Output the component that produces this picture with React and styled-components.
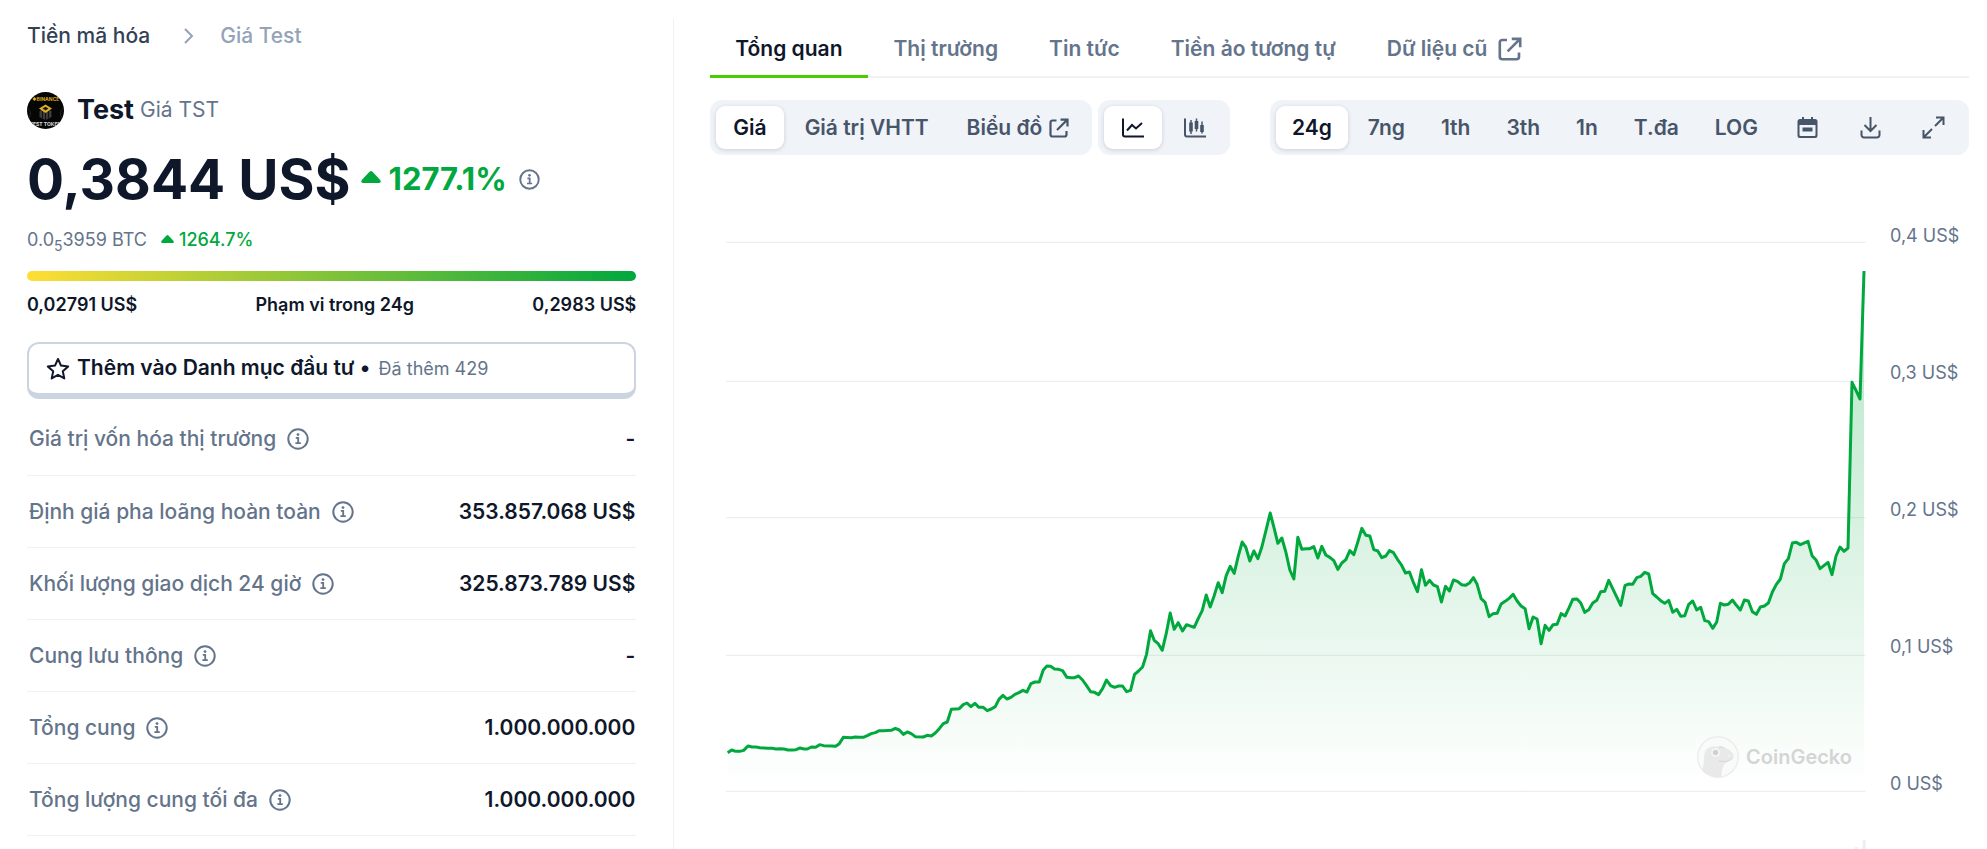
import React, { useState } from 'react';
import styled, { createGlobalStyle } from 'styled-components';

const GlobalStyle = createGlobalStyle`
  * {
    box-sizing: border-box;
  }
  body {
    margin: 0;
    background: #fff;
    color: #0f172a;
    font-family: Inter, 'Liberation Sans', sans-serif;
    font-size: 21px;
    line-height: 30px;
  }
  button {
    font: inherit;
    color: inherit;
    border: 0;
    padding: 0;
    background: none;
    cursor: pointer;
  }
  a {
    color: inherit;
    text-decoration: none;
  }
  svg {
    display: block;
    flex: none;
  }
`;

const Page = styled.div`
  display: grid;
  grid-template-columns: minmax(0, 1fr) minmax(0, 2fr);
  height: 100vh;
  padding: 19px 18px 0 27px;
  overflow: hidden;
`;

const Sidebar = styled.aside`
  padding-right: 37px;
  border-right: 1px solid #eff2f5;
`;

const Main = styled.main`
  padding-left: 36px;
`;

const Breadcrumb = styled.nav`
  display: flex;
  align-items: center;
  gap: 25px;
  height: 34px;
  font-weight: 500;
  color: #334155;
`;

const Muted = styled.span`
  color: #94a3b8;
`;

const CoinTitle = styled.h1`
  display: flex;
  align-items: center;
  margin: 38px 0 0;
  height: 38px;
  font-size: 27px;
  font-weight: 700;
`;

const CoinName = styled.span`
  margin: 0 6px 0 13px;
`;

const Symbol = styled.span`
  font-size: 21px;
  font-weight: 400;
  color: #64748b;
`;

const PriceRow = styled.div`
  display: flex;
  align-items: center;
  height: 72px;
  margin-top: 14px;
  color: #64748b;
`;

const Price = styled.span`
  font-size: 55px;
  font-weight: 700;
  color: #0f172a;
`;

const Change = styled.span`
  display: flex;
  align-items: center;
  gap: ${({ $large }) => ($large ? '8px' : '5px')};
  margin: ${({ $large }) => ($large ? '0 12px 0 10px' : '0 0 0 14px')};
  font-size: ${({ $large }) => ($large ? '31px' : '18px')};
  font-weight: ${({ $large }) => ($large ? 700 : 500)};
  color: #00a83e;
  svg {
    margin-bottom: ${({ $large }) => ($large ? '4px' : '2px')};
  }
`;

const BtcRow = styled.div`
  display: flex;
  align-items: center;
  height: 30px;
  margin-top: 10px;
  font-size: 18px;
  color: #64748b;
  sub {
    font-size: 14px;
    line-height: 0;
  }
`;

const RangeBar = styled.div`
  height: 10px;
  margin-top: 16px;
  border-radius: 5px;
  background: linear-gradient(90deg, #ffde33, #00a83e);
`;

const RangeLabels = styled.div`
  display: flex;
  justify-content: space-between;
  margin-top: 9px;
  font-size: 18px;
  font-weight: 600;
`;

const PortfolioButton = styled.button`
  display: flex;
  align-items: center;
  gap: 7px;
  width: 100%;
  height: 57px;
  margin-top: 22px;
  padding: 0 17px;
  border: 2px solid #cbd5e1;
  border-bottom-width: 6px;
  border-radius: 12px;
  font-weight: 600;
  small {
    margin-left: 3px;
    font-size: 18px;
    font-weight: 400;
    color: #64748b;
  }
`;

const StatsTable = styled.table`
  width: 100%;
  margin-top: 4px;
  border-collapse: collapse;
  tr {
    height: 72px;
    border-bottom: 1px solid #eff2f5;
  }
  th {
    padding: 1px 2px 0;
    text-align: left;
    font-weight: 500;
    color: #64748b;
  }
  td {
    padding: 1px 1px 0;
    text-align: right;
    font-weight: 600;
  }
`;

const StatLabel = styled.span`
  display: flex;
  align-items: center;
  gap: 11px;
`;

const Tabs = styled.nav`
  display: flex;
  height: 59px;
  border-bottom: 2px solid #eff2f5;
`;

const Tab = styled.a`
  display: flex;
  align-items: center;
  gap: 11px;
  height: 59px;
  padding: 3px 26px 0 25px;
  border-bottom: 3px solid ${({ $active }) => ($active ? '#4bcc00' : 'transparent')};
  font-weight: 600;
  color: ${({ $active }) => ($active ? '#0f172a' : '#64748b')};
`;

const Toolbar = styled.div`
  display: flex;
  flex-wrap: wrap;
  gap: 6px;
  margin-top: 22px;
`;

const Group = styled.div`
  display: flex;
  gap: 4px;
  padding: 6px;
  border-radius: 12px;
  background: #f0f3f8;
  &:last-child {
    margin-left: auto;
  }
`;

const Segment = styled.button`
  display: flex;
  align-items: center;
  gap: 7px;
  height: 43px;
  padding: 0 ${({ $wide }) => ($wide ? '17px' : '16px')};
  border-radius: 9px;
  font-weight: 600;
  color: ${({ $active }) => ($active ? '#0f172a' : '#475569')};
  background: ${({ $active }) => ($active ? '#fff' : 'transparent')};
  box-shadow: ${({ $active }) => ($active ? '0 1px 4px rgba(15, 23, 42, 0.16)' : 'none')};
`;

const Chart = styled.section`
  display: flex;
  gap: 24px;
  margin-top: 15px;
  padding-left: 16px;
`;

const Plot = styled.div`
  position: relative;
  flex: 1;
  min-width: 0;
  svg.series {
    width: 100%;
    height: 679px;
  }
`;

const Axis = styled.div`
  display: grid;
  grid-auto-rows: 137px;
  align-items: center;
  width: 79px;
  height: 679px;
  margin-top: -3px;
  font-size: 18px;
  color: #64748b;
`;

const Watermark = styled.div`
  position: absolute;
  right: 14px;
  top: 566px;
  display: flex;
  align-items: center;
  gap: 7px;
  font-size: 20px;
  font-weight: 600;
  color: #d3d5d5;
`;

const InfoIcon = ({ size = 22 }) => (
  <svg width={size} height={size} viewBox="0 0 22 22" fill="none" stroke="#64748b" strokeWidth="2">
    <circle cx="11" cy="11" r="9.7" />
    <path d="M8.8 9.8h2.4v5.4M8.4 15.2h5.4" strokeWidth="1.8" />
    <circle cx="11" cy="6.6" r="1.4" fill="#64748b" stroke="none" />
  </svg>
);

const UpIcon = ({ width, height }) => (
  <svg width={width} height={height} viewBox="0 0 20 12" fill="#00a83e">
    <path d="M8.5.8 1 8.800Q-1 12 2 12h16q3 0 1-3.200L11.500.8Q10-.8 8.500.8z" />
  </svg>
);

const ExternalIcon = ({ size = 20 }) => (
  <svg width={size} height={size} viewBox="0 0 20 20" fill="none" stroke="currentColor" strokeWidth="2.200">
    <path d="M7.500 2.500h-4a2 2 0 0 0-2 2v12a2 2 0 0 0 2 2h12a2 2 0 0 0 2-2V13" />
    <path d="M11.500 1.600h7V8.500M18 2 8 12" />
  </svg>
);

const LineIcon = () => (
  <svg width="26" height="24" viewBox="0 0 26 24" fill="none" stroke="currentColor" strokeWidth="2">
    <path d="M3 2.500v16a2 2 0 0 0 2 2h19" />
    <path d="m7 14.500 5-5.500 4 3.500L22 7" />
  </svg>
);

const CandleIcon = () => (
  <svg width="26" height="24" viewBox="0 0 26 24" fill="none" stroke="currentColor">
    <path d="M3 2.500v16a2 2 0 0 0 2 2h19" strokeWidth="2" />
    <path d="M9 4v14M14.500 2.500v13M20 5.500v12" strokeWidth="1.500" />
    <path d="M9 6.500v9M14.500 5v8M20 9v7" strokeWidth="3.600" />
  </svg>
);

const CalendarIcon = () => (
  <svg width="27" height="27" viewBox="0 0 27 27" fill="currentColor">
    <path d="M6 5h2V3h2v2h7V3h2v2h2a2.500 2.500 0 0 1 2.500 2.500v14A2.500 2.500 0 0 1 21 24H6a2.500 2.500 0 0 1-2.500-2.500v-14A2.500 2.500 0 0 1 6 5zm-.5 6v10a1 1 0 0 0 1 1h14a1 1 0 0 0 1-1V11z" fillRule="evenodd" />
    <path d="M8.500 13.500h10v4h-10z" />
  </svg>
);

const DownloadIcon = () => (
  <svg width="27" height="27" viewBox="0 0 27 27" fill="none" stroke="currentColor" strokeWidth="2">
    <path d="M13.500 3v14M7.500 11l6 6 6-6" />
    <path d="M4.500 16.500v4.500a2.500 2.500 0 0 0 2.500 2.500h13a2.500 2.500 0 0 0 2.500-2.500v-4.500" />
  </svg>
);

const ExpandIcon = () => (
  <svg width="27" height="27" viewBox="0 0 27 27" fill="none" stroke="currentColor" strokeWidth="2">
    <path d="M16 3.500h7.500V11M23 4l-8 8" />
    <path d="M11 23.500H3.500V16M4 23l8-8" />
  </svg>
);

const StarIcon = () => (
  <svg width="24" height="24" viewBox="0 0 24 24" fill="none" stroke="#0f172a" strokeWidth="2" strokeLinejoin="round">
    <path d="m12 2 3 6.600 7.200.8-5.400 4.900 1.500 7.100L12 17.800l-6.300 3.600 1.500-7.100L1.800 9.400 9 8.600z" />
  </svg>
);

const ChevronIcon = () => (
  <svg width="20" height="20" viewBox="0 0 20 20" fill="none" stroke="#94a3b8" strokeWidth="2">
    <path d="m10 3 7 7-7 7" />
  </svg>
);

const CoinLogo = () => (
  <svg width="37" height="37" viewBox="0 0 37 37">
    <defs>
      <clipPath id="coin"><circle cx="18.500" cy="18.500" r="18.500" /></clipPath>
    </defs>
    <g clipPath="url(#coin)">
      <rect width="37" height="37" fill="#060606" />
      <path d="m18.500 16 6 3v6l-6 3-6-3v-6z" fill="#3d3d3d" />
      <path d="M18.500 20v8M15.500 19v7M21.500 19v7" stroke="#111" />
      <path d="m18.500 12.500 6.500 4-6.500 4.500-6.500-4.500z" fill="#e0b020" />
      <path d="m18.500 14.800 3 1.700-3 2-3-2z" fill="#1a1a1a" />
      <path d="M1 17c3 1 3 6 1 9M36 17c-3 1-3 6-1 9" stroke="#2b2b2b" fill="none" />
      <path d="m7.500 5 2 2-2 2-2-2z" fill="#e0b020" />
      <text x="21" y="9" textAnchor="middle" fontSize="5" fontWeight="700" fill="#d9a91c">BINANCE</text>
      <text x="18.500" y="34" textAnchor="middle" fontSize="5" fontWeight="700" fill="#ddd">TEST TOKEN</text>
    </g>
  </svg>
);

const GeckoLogo = () => (
  <svg width="42" height="42" viewBox="0 0 42 42">
    <circle cx="21" cy="21" r="20.300" fill="#f9fafa" stroke="#ececec" strokeWidth="1.400" />
    <path d="M5 33.500C8 28 6 22 8 16c1.500-4 5-5.500 10-5.500 3 0 5-.5 8 .5 4 1.500 9 4 10.500 7.500 1 4-4 6.500-8 8.500-3 3-4 8-4 13.800C17 42 9 39 5 33.500z" fill="#e9e9e9" />
    <path d="M22 24.500c5 2 11 1 14-3" fill="none" stroke="#d8d8d8" />
    <path d="M22 11c2-.6 4 0 5 1" fill="none" stroke="#d8d8d8" />
    <circle cx="18.500" cy="16.500" r="4.300" fill="#f8f8f8" />
    <circle cx="18.500" cy="16.500" r="2.700" fill="#d0d0d0" />
    <circle cx="32" cy="20" r=".8" fill="#f8f8f8" />
  </svg>
);

// Price samples, cut in four runs; dx / dy place each run in plot units.
const RUNS = [
  {
    dx: 0,
    dy: 0,
    points: '83,458 95,450 107,454 119,454 131,451 144,438 156,441 168,441 180,443 192,444 204,445 216,445 228,447 240,446 252,447 264,450 276,450 288,449 300,444 312,447 322,447 334,441 347,442 359,434 371,437 395,438 407,439 418,431 430,412 454,413 466,411 478,412 490,412 502,407 514,401 526,398 538,392 550,392 574,391 586,385 598,390 610,403 622,396 634,401 646,410 670,411 682,406 694,408 706,399 718,386 730,371 742,366 754,328 766,327 778,326 790,314 801,309 813,320 825,310 837,322 850,322 862,332 874,327 886,320 897,298 909,286 921,297 933,292 945,283 957,278 969,271 981,276 993,251 1005,246 1018,246 1030,210 1041,198 1052,199 1064,207 1076,208 1088,212 1101,232 1113,233 1124,233 1136,228 1148,240 1160,257 1172,275 1184,277 1196,284 1208,266 1220,240 1232,257 1244,262 1256,258 1268,258 1280,275 1292,271',
  },
  {
    dx: 1200,
    dy: -360,
    points: '104,583 116,573 128,561 140,523 152,452 163,481 175,491 187,511 199,461 211,399 223,448 235,428 248,453 260,434 283,442 295,416 307,392 319,345 331,381 343,347 355,308 367,338 379,287 391,259 403,280 415,229 427,186 438,202 450,243 462,213 474,236 486,201 499,149 511,99 523,145 534,190 546,174 558,216 570,270 582,297 594,172 606,208 618,206 630,206 642,200 654,234 666,199 678,225 690,232 702,242 714,268 726,249 738,239 750,212 762,224 774,186 786,145 798,166 810,168 822,209 834,213 846,233 858,228 869,212 881,218 893,238 905,255 917,279 929,276 941,308 953,335 965,269 977,316 989,301 1001,315 1013,320 1025,366 1037,319 1049,333 1061,300 1073,304 1085,314 1097,316 1109,309 1121,293 1132,313 1144,356 1156,367 1168,410 1180,401 1192,400 1204,372 1216,364 1228,355 1240,343 1252,363 1264,378 1276,386 1288,446 1300,411 1312,417',
  },
  {
    dx: 2400,
    dy: -300,
    points: '124,431 136,376 148,391 160,374 172,373 184,341 196,348 208,323 219,298 232,297 243,309 255,337 267,329 279,309 291,301 303,275 315,274 327,241 363,316 376,256 388,252 399,253 411,233 423,229 435,217 447,222 459,281 471,291 483,302 495,310 507,301 519,337 531,328 543,349 555,347 567,313 579,303 591,330 603,322 615,362 627,365 639,385 651,366 662,310 674,315 686,313 698,300 710,316 722,330 734,300 746,303 758,335 770,343 782,321 794,318 806,309 818,276 830,253 842,237 854,191 866,176 878,129 890,127 902,134 925,124 937,167 949,180 961,206 985,187 997,224 1009,168 1021,141 1033,154 1045,144',
  },
  { dx: 2940, dy: -1140, points: '517,487 529,511 541,537 553,153' },
];

const line = RUNS.flatMap(({ dx, dy, points }) => points.split(' ').map((pair) => {
  const [x, y] = pair.split(',').map(Number);
  return `${x + dx},${y + dy}`;
})).join(' ');

const GRID_LINES = [-1073, -656, -247, 166, 574];
const AXIS_LABELS = ['0,4 US$', '0,3 US$', '0,2 US$', '0,1 US$', '0 US$'];

const STATS = [
  ['Giá trị vốn hóa thị trường', '-'],
  ['Định giá pha loãng hoàn toàn', '353.857.068 US$'],
  ['Khối lượng giao dịch 24 giờ', '325.873.789 US$'],
  ['Cung lưu thông', '-'],
  ['Tổng cung', '1.000.000.000'],
  ['Tổng lượng cung tối đa', '1.000.000.000'],
];

const TABS = ['Tổng quan', 'Thị trường', 'Tin tức', 'Tiền ảo tương tự', 'Dữ liệu cũ'];
const RANGES = ['24g', '7ng', '1th', '3th', '1n', 'T.đa', 'LOG'];

const CoinPanel = () => (
  <Sidebar>
    <Breadcrumb>
      <a href="#coins">Tiền mã hóa</a>
      <ChevronIcon />
      <Muted>Giá Test</Muted>
    </Breadcrumb>
    <CoinTitle>
      <CoinLogo />
      <CoinName>Test</CoinName>
      <Symbol>Giá TST</Symbol>
    </CoinTitle>
    <PriceRow>
      <Price>0,3844 US$</Price>
      <Change $large>
        <UpIcon width={20} height={12} />
        1277.1%
      </Change>
      <InfoIcon size={21} />
    </PriceRow>
    <BtcRow>
      <span>0.0<sub>5</sub>3959 BTC</span>
      <Change>
        <UpIcon width={13} height={8} />
        1264.7%
      </Change>
    </BtcRow>
    <RangeBar />
    <RangeLabels>
      <span>0,02791 US$</span>
      <span>Phạm vi trong 24g</span>
      <span>0,2983 US$</span>
    </RangeLabels>
    <PortfolioButton type="button">
      <StarIcon />
      <span>Thêm vào Danh mục đầu tư • <small>Đã thêm 429</small></span>
    </PortfolioButton>
    <StatsTable>
      <tbody>
        {STATS.map(([label, value]) => (
          <tr key={label}>
            <th scope="row">
              <StatLabel>
                {label}
                <InfoIcon />
              </StatLabel>
            </th>
            <td>{value}</td>
          </tr>
        ))}
      </tbody>
    </StatsTable>
  </Sidebar>
);

const PriceChart = () => (
  <Chart>
    <Plot>
      <svg className="series" viewBox="78 -1290 3420 2037" preserveAspectRatio="none">
        <defs>
          <linearGradient id="fade" gradientUnits="userSpaceOnUse" x1="0" y1="-987" x2="0" y2="570">
            <stop offset="0" stopColor="#00a83e" stopOpacity="0.3" />
            <stop offset="1" stopColor="#00a83e" stopOpacity="0" />
          </linearGradient>
        </defs>
        {GRID_LINES.map((y) => (
          <path key={y} d={`M78 ${y}H3498`} stroke="#eceff2" strokeWidth="4" />
        ))}
        <polygon points={`83,574 ${line} 3493,574`} fill="url(#fade)" />
        <polyline points={line} fill="none" stroke="#00a83e" strokeWidth="3" strokeLinejoin="round" vectorEffect="non-scaling-stroke" />
        <path d="M3489 720h9v27h-9zM3466 741h9v6h-9z" fill="#eceff5" />
      </svg>
      <Watermark>
        <GeckoLogo />
        CoinGecko
      </Watermark>
    </Plot>
    <Axis>
      {AXIS_LABELS.map((label) => <span key={label}>{label}</span>)}
    </Axis>
  </Chart>
);

const App = () => {
  const [range, setRange] = useState('24g');
  const [metric, setMetric] = useState('price');
  const [candles, setCandles] = useState(false);

  return (
    <>
      <GlobalStyle />
      <Page>
        <CoinPanel />
        <Main>
          <Tabs>
            {TABS.map((tab, i) => (
              <Tab key={tab} href="#tab" $active={i === 0}>
                {tab}
                {i === TABS.length - 1 ? <ExternalIcon size={24} /> : ''}
              </Tab>
            ))}
          </Tabs>
          <Toolbar>
            <Group>
              <Segment $wide $active={metric === 'price'} onClick={() => setMetric('price')}>Giá</Segment>
              <Segment $wide $active={metric === 'cap'} onClick={() => setMetric('cap')}>Giá trị VHTT</Segment>
              <Segment $wide>
                Biểu đồ
                <ExternalIcon />
              </Segment>
            </Group>
            <Group>
              <Segment aria-label="Line" $active={!candles} onClick={() => setCandles(false)}><LineIcon /></Segment>
              <Segment aria-label="Candles" $active={candles} onClick={() => setCandles(true)}><CandleIcon /></Segment>
            </Group>
            <Group>
              {RANGES.map((name) => (
                <Segment key={name} $active={name === range} onClick={() => setRange(name)}>{name}</Segment>
              ))}
              <Segment aria-label="Calendar"><CalendarIcon /></Segment>
              <Segment aria-label="Download"><DownloadIcon /></Segment>
              <Segment aria-label="Fullscreen"><ExpandIcon /></Segment>
            </Group>
          </Toolbar>
          <PriceChart />
        </Main>
      </Page>
    </>
  );
};

export default App;
